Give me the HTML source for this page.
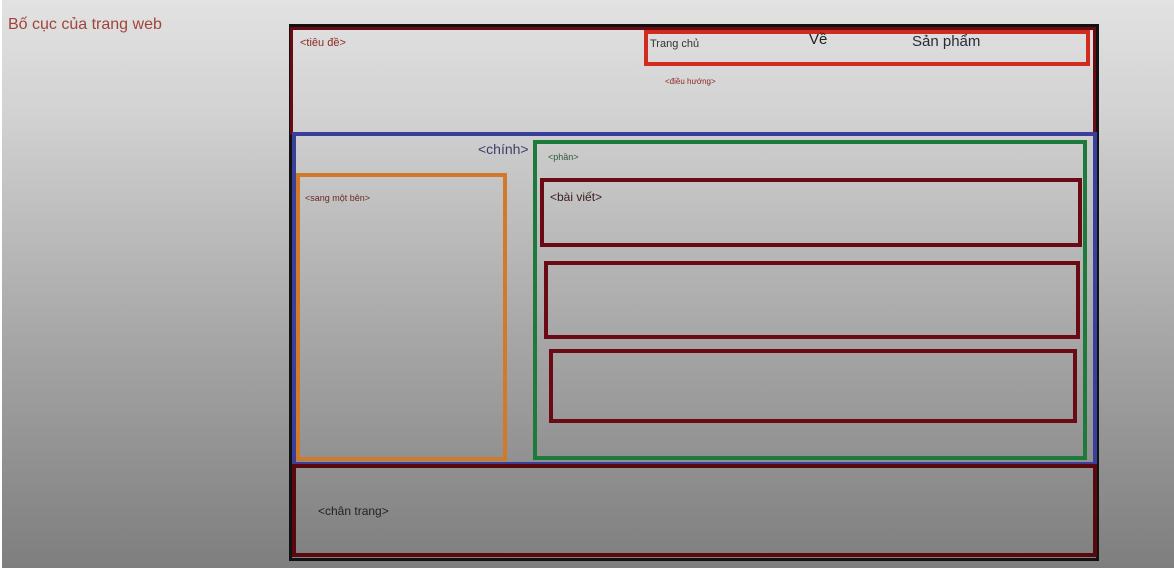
<!DOCTYPE html>
<html><head><meta charset="utf-8"><style>
html,body{margin:0;padding:0}
body{width:1174px;height:568px;position:relative;overflow:hidden;background:linear-gradient(#e2e2e2 0%,#d2d2d2 20%,#a6a6a6 60%,#7e7e7e 100%);font-family:"Liberation Sans",sans-serif}
.b{position:absolute;box-sizing:border-box}
.t{position:absolute;white-space:nowrap}
</style></head><body>
<div class="b" style="left:0;top:0;width:2px;height:568px;background:#fff"></div>
<div class="t" style="left:8px;top:16px;font-size:16px;color:#a0443a">Bố cục của trang web</div>
<div class="b" style="left:289px;top:24px;width:810px;height:537px;border:3px solid #111"></div>
<div class="b" style="left:290px;top:27px;width:806px;height:108px;border:3px solid #6a0a12"></div>
<div class="b" style="left:644px;top:30px;width:446px;height:36px;border:4px solid #d22a1e"></div>
<div class="b" style="left:292px;top:132px;width:805px;height:334px;border:4px solid #3a3f9a"></div>
<div class="b" style="left:296px;top:173px;width:211px;height:288px;border:4px solid #d07a2a"></div>
<div class="b" style="left:533px;top:140px;width:554px;height:320px;border:4px solid #1e7a3a"></div>
<div class="b" style="left:540px;top:178px;width:542px;height:69px;border:4px solid #6a0a14"></div>
<div class="b" style="left:544px;top:261px;width:536px;height:78px;border:4px solid #6a0a14"></div>
<div class="b" style="left:549px;top:349px;width:528px;height:74px;border:4px solid #6a0a14"></div>
<div class="b" style="left:292px;top:464px;width:805px;height:93px;border:4px solid #5a0810"></div>
<div class="t" style="left:300px;top:37px;font-size:11px;color:#8a2a22">&lt;tiêu đề&gt;</div>
<div class="t" style="left:650px;top:38px;font-size:11px;color:#333">Trang chủ</div>
<div class="t" style="left:809px;top:31px;font-size:15px;color:#222">Về</div>
<div class="t" style="left:912px;top:33px;font-size:15px;color:#2a2a3a">Sản phẩm</div>
<div class="t" style="left:665px;top:77px;font-size:8px;color:#8a2a22">&lt;điều hướng&gt;</div>
<div class="t" style="left:478px;top:141px;font-size:14px;color:#3a3f6a">&lt;chính&gt;</div>
<div class="t" style="left:548px;top:152px;font-size:9px;color:#2a5a3a">&lt;phần&gt;</div>
<div class="t" style="left:305px;top:193px;font-size:9px;color:#6a2a22">&lt;sang một bên&gt;</div>
<div class="t" style="left:550px;top:190px;font-size:12px;color:#3a1a1a">&lt;bài viết&gt;</div>
<div class="t" style="left:318px;top:504px;font-size:12px;color:#222">&lt;chân trang&gt;</div>
</body></html>
